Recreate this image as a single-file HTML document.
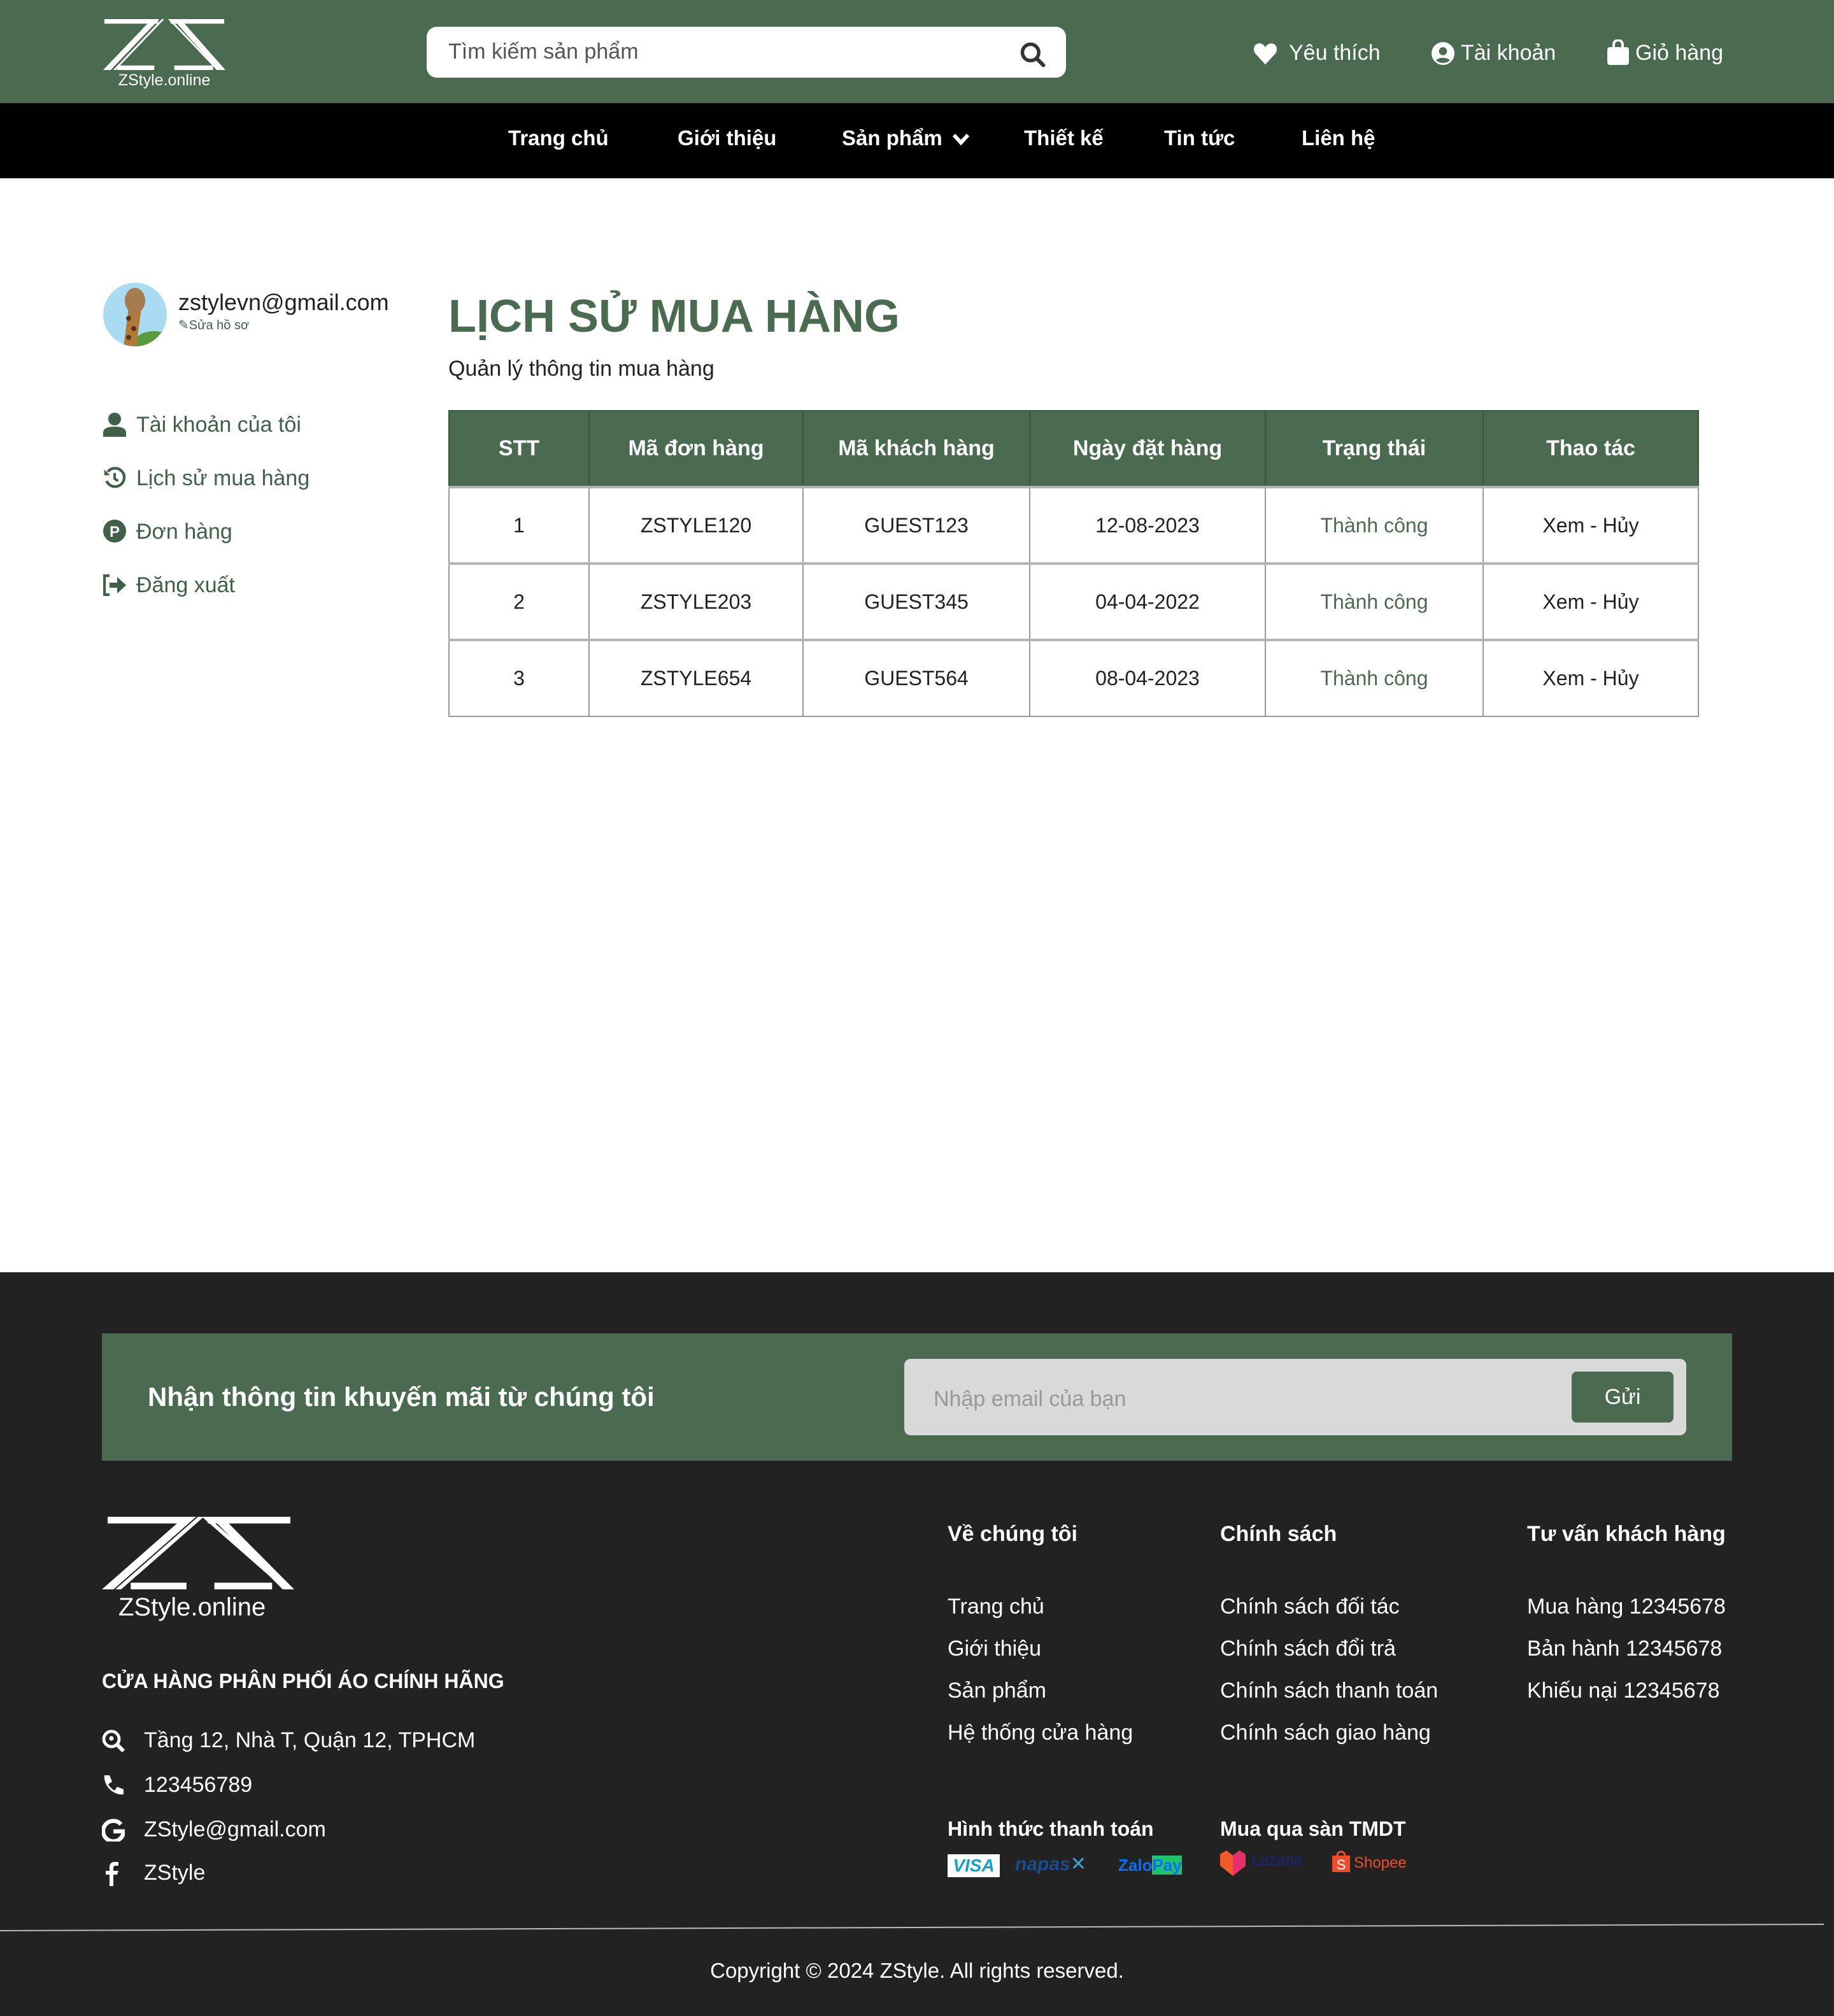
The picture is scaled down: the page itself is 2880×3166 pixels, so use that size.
<!DOCTYPE html>
<html><head><meta charset="utf-8">
<style>
html{zoom:2}
*{margin:0;padding:0;box-sizing:border-box}
body{width:1440px;height:1583px;position:relative;overflow:hidden;background:#fff;font-family:"Liberation Sans","DejaVu Sans",sans-serif;color:#222}
.a{position:absolute;white-space:nowrap}
.g{color:#3f6148}
table{border-collapse:collapse;position:absolute;left:352px;top:322px;width:982px;font-size:16px;text-align:center}
th{background:#4a6b50;color:#fff;font-weight:bold;height:60px;border:1px solid #3a5640;font-size:17px}
td{height:60px;border:1px solid #999;border-top:2px solid #b3b3b3}
td.s{color:#4a6b50}
.fl{color:#fff;font-size:17px}
</style></head><body>
<!-- header -->
<div class="a" style="left:0;top:0;width:1440px;height:81px;background:#4a6b50"></div>
<svg class="a" style="left:80px;top:15px" width="98" height="40" viewBox="0 0 200 100" preserveAspectRatio="none">
<g fill="#fff"><rect x="4" y="0" width="86" height="9"/><polygon points="80,0 92,0 14,100 2,100"/><polygon points="96,0 100,0 22,100 18,100"/><rect x="24" y="91" width="60" height="9"/>
<rect x="110" y="0" width="86" height="9"/><polygon points="106,0 110,0 188,100 184,100"/><polygon points="114,0 126,0 198,100 186,100"/><rect x="116" y="91" width="62" height="9"/></g></svg>
<div class="a" style="left:80px;width:98px;text-align:center;top:56px;font-size:12.5px;color:#fff">ZStyle.online</div>
<div class="a" style="left:335px;top:21px;width:502px;height:40px;background:#fff;border-radius:8px"></div>
<div class="a" style="left:352px;top:31px;font-size:17px;color:#555">Tìm kiếm sản phẩm</div>
<svg class="a" style="left:800px;top:32px" width="22" height="22" viewBox="0 0 24 24"><circle cx="10" cy="10" r="7" fill="none" stroke="#333" stroke-width="3"/><path d="M15 15l6 6" stroke="#333" stroke-width="3.2" stroke-linecap="round"/></svg>
<svg class="a" style="left:984px;top:33px" width="19" height="18" viewBox="0 0 24 22"><path d="M12 22L2 11C-1 7 1 1 6 1c3 0 5 2 6 4 1-2 3-4 6-4 5 0 7 6 4 10z" fill="#fff"/></svg>
<div class="a" style="left:1012px;top:32px;font-size:17px;color:#fff">Yêu thích</div>
<svg class="a" style="left:1124px;top:33px" width="18" height="18" viewBox="0 0 20 20"><circle cx="10" cy="10" r="10" fill="#fff"/><circle cx="10" cy="8" r="3.5" fill="#4a6b50"/><path d="M4 16c2-3 10-3 12 0c-3 3-9 3-12 0z" fill="#4a6b50"/></svg>
<div class="a" style="left:1147px;top:32px;font-size:17px;color:#fff">Tài khoản</div>
<svg class="a" style="left:1262px;top:31px" width="17" height="20" viewBox="0 0 17 20"><path d="M5 7V4a3.5 3.5 0 017 0v3" fill="none" stroke="#fff" stroke-width="2"/><rect x="0" y="6" width="17" height="14" rx="2" fill="#fff"/></svg>
<div class="a" style="left:1284px;top:32px;font-size:17px;color:#fff">Giỏ hàng</div>
<!-- nav -->
<div class="a" style="left:0;top:81px;width:1440px;height:59px;background:#000"></div>
<div class="a" style="top:99px;left:0;font-size:16.5px;font-weight:bold;color:#fff">
<span class="a" style="left:399px">Trang chủ</span><span class="a" style="left:532px">Giới thiệu</span><span class="a" style="left:661px">Sản phẩm</span><span class="a" style="left:804px">Thiết kế</span><span class="a" style="left:914px">Tin tức</span><span class="a" style="left:1022px">Liên hệ</span></div>
<svg class="a" style="left:747px;top:104px" width="15" height="11" viewBox="0 0 15 11"><path d="M2 2l5.5 6 5.5-6" fill="none" stroke="#fff" stroke-width="3"/></svg>
<!-- sidebar -->
<svg class="a" style="left:81px;top:222px" width="50" height="50" viewBox="0 0 50 50"><defs><clipPath id="c"><circle cx="25" cy="25" r="25"/></clipPath></defs><g clip-path="url(#c)"><rect width="50" height="50" fill="#a9dcf2"/><ellipse cx="40" cy="48" rx="16" ry="10" fill="#5a9a3c"/><path d="M16 50l4-30 10 0-4 30z" fill="#b07a3a"/><ellipse cx="25" cy="14" rx="8" ry="10" fill="#a67b52"/><circle cx="20" cy="28" r="2" fill="#5a3513"/><circle cx="24" cy="36" r="2" fill="#5a3513"/><circle cx="20" cy="43" r="2" fill="#5a3513"/></g></svg>
<div class="a" style="left:140px;top:227px;font-size:18px;color:#222">zstylevn@gmail.com</div>
<div class="a g" style="left:140px;top:249px;font-size:10px">✎Sửa hồ sơ</div>
<svg class="a" style="left:81px;top:324px" width="18" height="19" viewBox="0 0 18 19"><circle cx="9" cy="5" r="5" fill="#3f6148"/><path d="M0 19v-3c0-4 4-5 9-5s9 1 9 5v3z" fill="#3f6148"/></svg>
<div class="a g" style="left:107px;top:324px;font-size:17px">Tài khoản của tôi</div>
<svg class="a" style="left:81px;top:366px" width="18" height="18" viewBox="0 0 20 20"><path d="M4 5A8 8 0 1 1 3 13" fill="none" stroke="#3f6148" stroke-width="2.4"/><path d="M1 3l0 5 5 0z" fill="#3f6148"/><path d="M10 6v5l3 2" fill="none" stroke="#3f6148" stroke-width="2.2"/></svg>
<div class="a g" style="left:107px;top:366px;font-size:17px">Lịch sử mua hàng</div>
<svg class="a" style="left:81px;top:408px" width="18" height="18" viewBox="0 0 18 18"><circle cx="9" cy="9" r="9" fill="#3f6148"/><text x="9" y="13.5" font-size="12" font-weight="bold" fill="#fff" text-anchor="middle" font-family="Liberation Sans">P</text></svg>
<div class="a g" style="left:107px;top:408px;font-size:17px">Đơn hàng</div>
<svg class="a" style="left:81px;top:451px" width="19" height="17" viewBox="0 0 19 17"><path d="M5 1H1v15h4" fill="none" stroke="#3f6148" stroke-width="2.2"/><path d="M5 6.5h6V2l7 6.5-7 6.5v-4.5H5z" fill="#3f6148"/></svg>
<div class="a g" style="left:107px;top:450px;font-size:17px">Đăng xuất</div>
<!-- main -->
<div class="a" style="left:352px;top:228px;font-size:36px;font-weight:bold;color:#4a6b50">LỊCH SỬ MUA HÀNG</div>
<div class="a" style="left:352px;top:280px;font-size:17px">Quản lý thông tin mua hàng</div>
<table>
<tr><th style="width:110px">STT</th><th style="width:168px">Mã đơn hàng</th><th style="width:178px">Mã khách hàng</th><th style="width:185px">Ngày đặt hàng</th><th style="width:171px">Trạng thái</th><th>Thao tác</th></tr>
<tr><td>1</td><td>ZSTYLE120</td><td>GUEST123</td><td>12-08-2023</td><td class="s">Thành công</td><td>Xem - Hủy</td></tr>
<tr><td>2</td><td>ZSTYLE203</td><td>GUEST345</td><td>04-04-2022</td><td class="s">Thành công</td><td>Xem - Hủy</td></tr>
<tr><td>3</td><td>ZSTYLE654</td><td>GUEST564</td><td>08-04-2023</td><td class="s">Thành công</td><td>Xem - Hủy</td></tr>
</table>
<!-- footer -->
<div class="a" style="left:0;top:999px;width:1440px;height:584px;background:#222"></div>
<div class="a" style="left:80px;top:1047px;width:1280px;height:100px;background:#4a6b50"></div>
<div class="a" style="left:116px;top:1085px;font-size:21px;font-weight:bold;color:#fff">Nhận thông tin khuyến mãi từ chúng tôi</div>
<div class="a" style="left:710px;top:1067px;width:614px;height:60px;background:#d9d9d9;border-radius:5px"></div>
<div class="a" style="left:733px;top:1089px;font-size:17px;color:#999">Nhập email của bạn</div>
<div class="a" style="left:1234px;top:1077px;width:80px;height:40px;background:#4a6b50;border-radius:4px;color:#fff;font-size:17px;text-align:center;line-height:40px">Gửi</div>
<svg class="a" style="left:80px;top:1191px" width="151" height="57" viewBox="0 0 200 76" preserveAspectRatio="none">
<g fill="#fff"><rect x="6" y="0" width="84" height="7"/><polygon points="86,0 98,0 12,76 0,76"/><polygon points="100,0 106,0 20,76 14,76"/><rect x="30" y="69" width="58" height="7"/>
<rect x="110" y="0" width="86" height="7"/><polygon points="104,0 110,0 196,76 190,76"/><polygon points="113,0 125,0 200,76 188,76"/><rect x="117" y="69" width="60" height="7"/></g></svg>
<div class="a" style="left:93px;top:1251px;font-size:20px;color:#fff">ZStyle.online</div>
<div class="a" style="left:80px;top:1311px;font-size:16px;font-weight:bold;color:#fff">CỬA HÀNG PHÂN PHỐI ÁO CHÍNH HÃNG</div>
<svg class="a" style="left:80px;top:1358px" width="18" height="18" viewBox="0 0 18 18"><circle cx="7.5" cy="7.5" r="6" fill="none" stroke="#fff" stroke-width="2.4"/><path d="M12 12l5 5" stroke="#fff" stroke-width="3"/><circle cx="7.5" cy="7" r="1.8" fill="#fff"/></svg>
<div class="a fl" style="left:113px;top:1357px">Tầng 12, Nhà T, Quận 12, TPHCM</div>
<svg class="a" style="left:80px;top:1393px" width="18" height="18" viewBox="0 0 18 18"><path d="M2 1l4 0 2 5-3 2c1 2 3 4 5 5l2-3 5 2v4c-8 1-16-7-15-15z" fill="#fff"/></svg>
<div class="a fl" style="left:113px;top:1392px">123456789</div>
<svg class="a" style="left:80px;top:1428px" width="18" height="18" viewBox="0 0 18 18"><path d="M15 4.5A8 8 0 1 0 17 10H9" fill="none" stroke="#fff" stroke-width="3.2"/></svg>
<div class="a fl" style="left:113px;top:1427px">ZStyle@gmail.com</div>
<svg class="a" style="left:83px;top:1462px" width="11" height="19" viewBox="0 0 11 19"><path d="M3 19V10H0V7h3V4c0-3 2-4 4-4h3v3H8c-1 0-2 0-2 2v2h4l-1 3H6v9z" fill="#fff"/></svg>
<div class="a fl" style="left:113px;top:1461px">ZStyle</div>
<div class="a" style="left:744px;top:1195px;font-size:17px;font-weight:bold;color:#fff">Về chúng tôi</div>
<div class="a" style="left:958px;top:1195px;font-size:17px;font-weight:bold;color:#fff">Chính sách</div>
<div class="a" style="left:1199px;top:1195px;font-size:17px;font-weight:bold;color:#fff">Tư vấn khách hàng</div>
<div class="a fl" style="left:744px;top:1245px;line-height:33px">Trang chủ<br>Giới thiệu<br>Sản phẩm<br>Hệ thống cửa hàng</div>
<div class="a fl" style="left:958px;top:1245px;line-height:33px">Chính sách đối tác<br>Chính sách đổi trả<br>Chính sách thanh toán<br>Chính sách giao hàng</div>
<div class="a fl" style="left:1199px;top:1245px;line-height:33px">Mua hàng 12345678<br>Bản hành 12345678<br>Khiếu nại 12345678</div>
<div class="a" style="left:744px;top:1427px;font-size:16px;font-weight:bold;color:#fff">Hình thức thanh toán</div>
<div class="a" style="left:958px;top:1427px;font-size:16px;font-weight:bold;color:#fff">Mua qua sàn TMDT</div>
<div class="a" style="left:744px;top:1456px;width:41px;height:18px;background:#fff;color:#1a9ec8;font-size:14px;font-weight:bold;font-style:italic;text-align:center;line-height:18px">VISA</div>
<div class="a" style="left:797px;top:1455px;font-size:15px;font-style:italic;font-weight:bold;color:#1a4b8c">napas<span style="color:#3aa0d8">✕</span></div>
<div class="a" style="left:878px;top:1457px;font-size:13px;font-weight:bold;color:#0a6ef5">Zalo<span style="background:#1fc46a;color:#0a6ef5">Pay</span></div>
<svg class="a" style="left:957px;top:1453px" width="22" height="20" viewBox="0 0 22 20"><path d="M11 20L1 12V3l5-3 5 4 5-4 5 3v9z" fill="#f35a2a"/><path d="M11 20V4l5-4 5 3v9z" fill="#e6306a"/></svg>
<div class="a" style="left:983px;top:1454px;font-size:12px;color:#1a237e">Lazada</div>
<svg class="a" style="left:1046px;top:1453px" width="14" height="17" viewBox="0 0 14 17"><path d="M4 4a3 3 0 016 0" fill="none" stroke="#ee4d2d" stroke-width="1.5"/><rect y="4" width="14" height="13" fill="#ee4d2d"/><text x="7" y="15" font-size="11" fill="#fff" text-anchor="middle" font-family="Liberation Sans">S</text></svg>
<div class="a" style="left:1063px;top:1456px;font-size:12px;color:#ee4d2d">Shopee</div>
<div class="a" style="left:0;top:1513px;width:1432px;height:1px;background:#bbb;transform:rotate(-0.2deg)"></div>
<div class="a fl" style="left:0;width:1440px;text-align:center;top:1538px;font-size:16.5px">Copyright © 2024 ZStyle. All rights reserved.</div>
</body></html>
